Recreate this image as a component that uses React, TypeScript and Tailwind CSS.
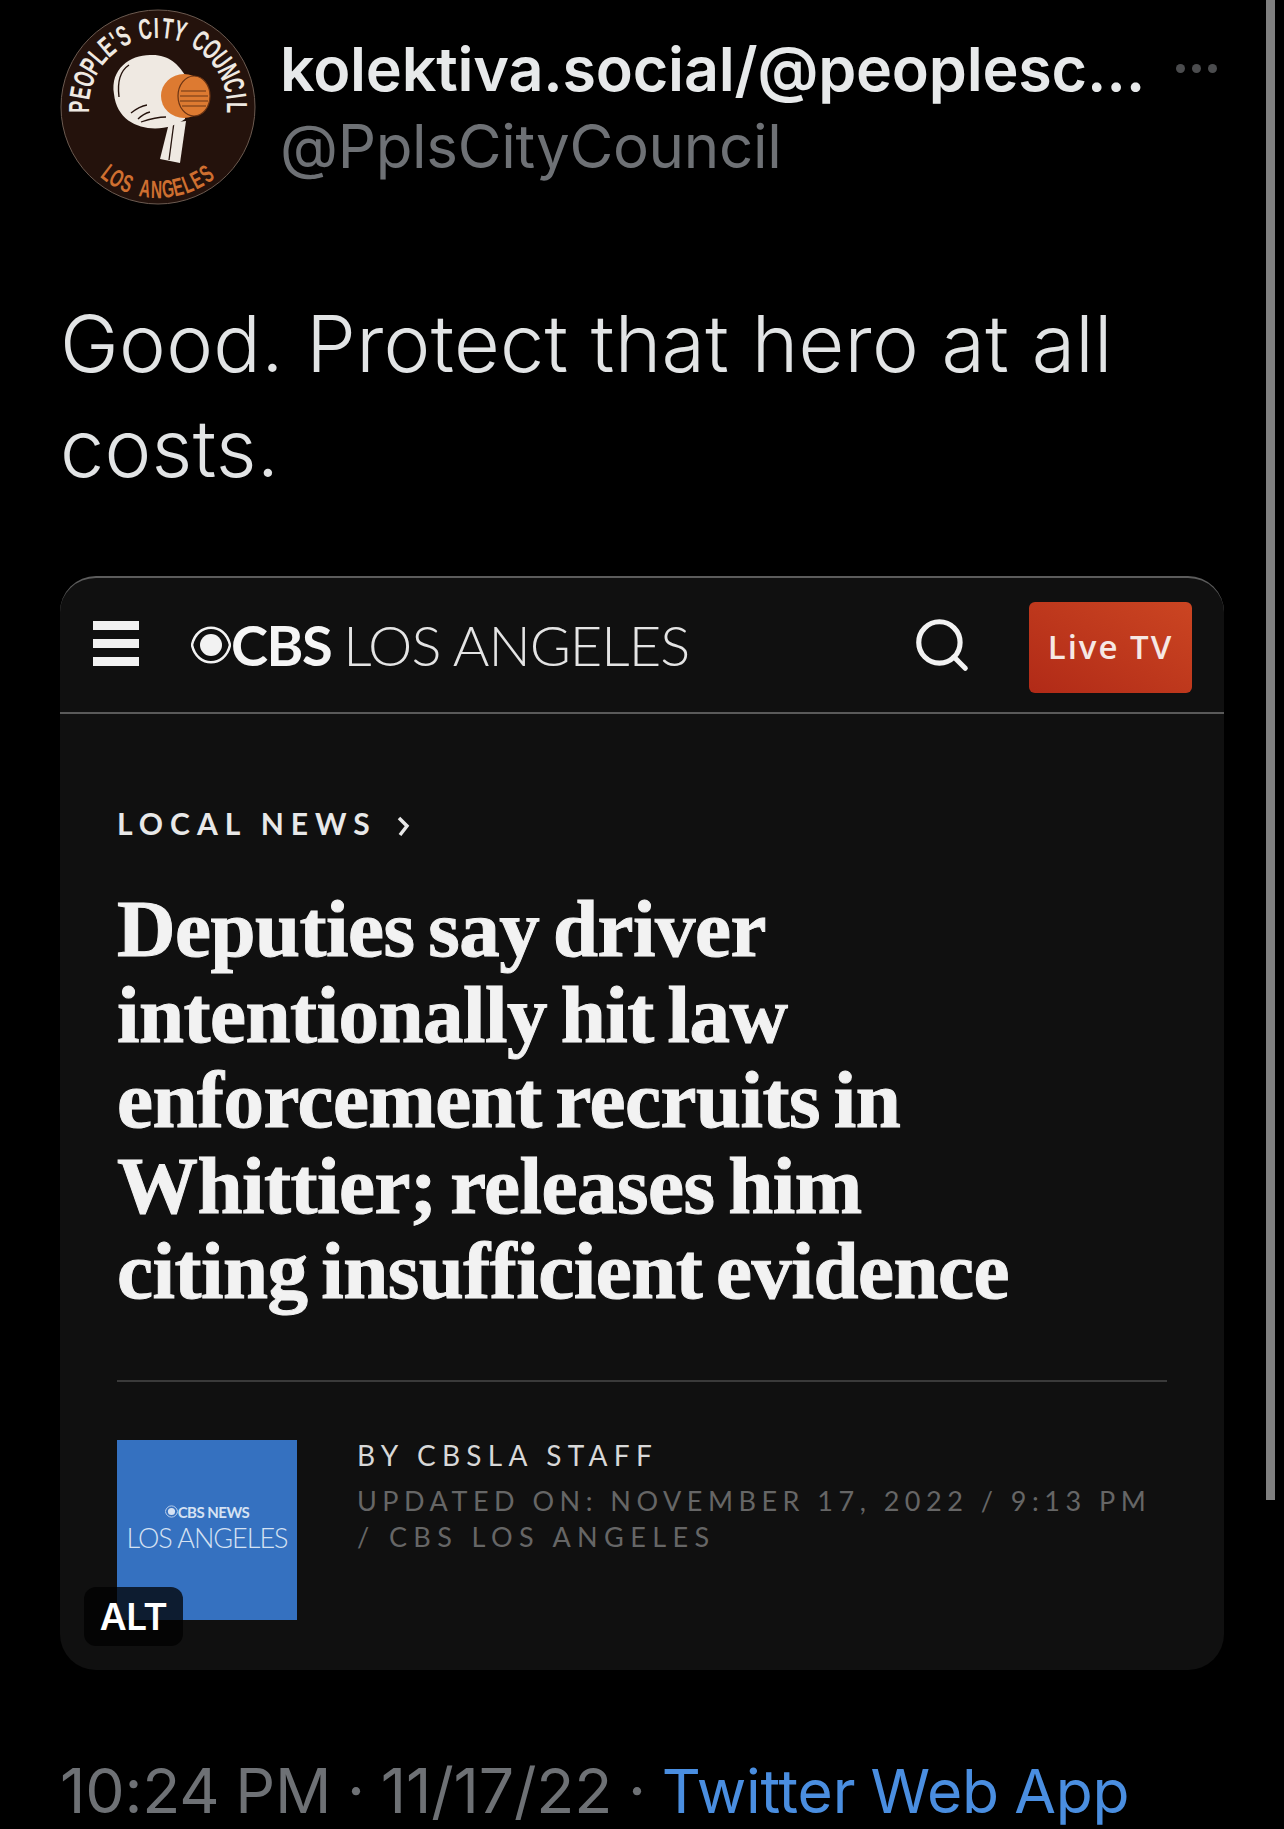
import React from 'react';
import { Search } from 'lucide-react';

const sans = 'font-["Inter",sans-serif]';

// sticker lettering: each letter is placed on the ring by hand
const topRing: [string, number][] = [
  ['P', -96], ['E', -86], ['O', -76], ['P', -66], ['L', -57], ['E', -48], ["'", -41], ['S', -34],
  ['C', -18], ['I', -10], ['T', -2], ['Y', 7],
  ['C', 23], ['O', 33], ['U', 43], ['N', 53], ['C', 63], ['I', 71], ['L', 79],
];
const bottomRing: [string, number][] = [
  ['L', -37], ['O', -30], ['S', -22],
  ['A', -9], ['N', -1], ['G', 7], ['E', 14], ['L', 21], ['E', 28], ['S', 36],
];

// round sticker avatar with the fist / megaphone drawing
const Avatar = () => (
  <svg width="196" height="196" viewBox="0 0 196 196" className="shrink-0">
    <circle cx="98" cy="98" r="97" fill="#24120c" stroke="#6b5a50" strokeWidth="1" />
    <g fontFamily="Liberation Sans, sans-serif" textAnchor="middle">
      {topRing.map(([ch, a], i) => (
        <text
          key={i}
          fontSize="29"
          fontWeight="700"
          fill="#efe9e2"
          transform={`rotate(${a * 1.03 + 9} 98 98) translate(98 29) scale(0.62 1)`}
        >
          {ch}
        </text>
      ))}
      {bottomRing.map(([ch, a], i) => (
        <text
          key={i}
          fontSize="25"
          fontWeight="700"
          fill="#cf6f30"
          transform={`rotate(${-a} 98 98) translate(98 189) scale(0.62 1)`}
        >
          {ch}
        </text>
      ))}
    </g>
    <path d="M109 114 L126 112 L120 154 L100 150 Z" fill="#efe9e2" />
    <path d="M114 113 L109 151" stroke="#24120c" strokeWidth="1.3" fill="none" />
    <path d="M54 85 C 50 60 70 46 90 46 C 108 45 118 55 125 66 L 125 110 C 105 126 58 124 54 85 Z" fill="#efe9e2" />
    <path d="M59 88 C 57 72 60 62 69 56" stroke="#24120c" strokeWidth="1.4" fill="none" />
    <path d="M71 104 C 76 100 81 97 87 96 M78 110 C 82 106 86 104 90 103 M81 113 C 90 110 98 108 106 108" stroke="#24120c" strokeWidth="1.3" fill="none" />
    <ellipse cx="124" cy="87" rx="23" ry="22" fill="#dd7a31" />
    <ellipse cx="134" cy="87" rx="16" ry="20" fill="#dd7a31" stroke="#6b3414" strokeWidth="1.2" />
    <path d="M121 82 H146 M120 87 H148 M120 92 H148 M122 97 H146" stroke="#6b3414" strokeWidth="1.1" />
  </svg>
);

const CbsEye = ({ size, color }: { size: number; color: string }) => (
  <svg width={size} height={size} viewBox="0 0 40 40" className="shrink-0">
    <path d="M1 20 C 6 -3 34 -3 39 20 C 34 43 6 43 1 20 Z" fill="none" stroke={color} strokeWidth="2.5" />
    <circle cx="20" cy="20" r="11" fill={color} />
  </svg>
);

const headline = [
  'Deputies say driver',
  'intentionally hit law',
  'enforcement recruits in',
  'Whittier; releases him',
  'citing insufficient evidence',
];

const App = () => {
  return (
    <div className={`relative w-[1284px] h-[1829px] overflow-hidden bg-black ${sans}`}>
      {/* overlay scrollbar */}
      <div className="absolute left-[1266px] top-0 w-[9px] h-[1500px] bg-[#808080]" />

      <header className="flex pl-[60px] pr-[67px] pt-[9px]">
        <Avatar />
        <div className="ml-[24px] pt-[25px] min-w-0 w-[866px]">
          <div className="text-[61px] leading-[70px] font-semibold tracking-[-0.2px] text-[#e7e9ea] whitespace-nowrap">
            kolektiva.social/@peoplesc…
          </div>
          <div className="text-[60px] leading-[84px] text-[#6e7175] tracking-[-0.3px] whitespace-nowrap">@PplsCityCouncil</div>
        </div>
        <div className="ml-auto mt-[55px] flex gap-[7px] h-[9px]">
          <span className="w-[9px] h-[9px] rounded-full bg-[#4b4c4e]" />
          <span className="w-[9px] h-[9px] rounded-full bg-[#4b4c4e]" />
          <span className="w-[9px] h-[9px] rounded-full bg-[#4b4c4e]" />
        </div>
      </header>

      <p className="mt-[86px] ml-[60px] w-[1120px] text-[79px] leading-[105px] font-light tracking-[0.3px] text-[#e2e4e5]">
        Good. Protect that hero at all costs.
      </p>

      <article className="relative mt-[75px] ml-[60px] w-[1164px] h-[1094px] rounded-[36px] overflow-hidden bg-[#101010] border-t-2 border-[#5c5c5c]">
        <nav className="flex items-center h-[136px] pl-[33px] pr-[32px] border-b-2 border-[#5a5a5a]">
          <div className="flex flex-col gap-[9px] w-[46px] mb-[3px]">
            <span className="h-[9px] bg-[#f2f2f2]" />
            <span className="h-[9px] bg-[#f2f2f2]" />
            <span className="h-[9px] bg-[#f2f2f2]" />
          </div>
          <div className="ml-[52px] flex items-center">
            <CbsEye size={40} color="#f2f2f2" />
            <span className='font-["Lato",sans-serif] text-[56px] font-bold tracking-[-1.5px] text-[#f5f5f5]'>CBS</span>
            <span className='ml-[12px] font-["Lato",sans-serif] text-[56px] font-light tracking-[-1px] text-[#e4e4e4]'>LOS ANGELES</span>
          </div>
          <Search size={62} strokeWidth={2} className="ml-auto text-[#f2f2f2]" />
          <div className='ml-[56px] mt-[4px] flex items-center justify-center w-[163px] h-[91px] rounded-[6px] bg-gradient-to-tr from-[#b12a17] to-[#cb4522] font-["Open_Sans",sans-serif] text-[33px] font-semibold tracking-[2px] text-[#f6e8e4]'>
            Live TV
          </div>
        </nav>

        <div className="px-[57px]">
          <div className="mt-[94px] flex items-center h-[30px] text-[30px] font-bold tracking-[7px] text-[#e8e8e8] font-['Lato',sans-serif]">
            LOCAL NEWS
            <svg width="14" height="22" viewBox="0 0 14 22" className="ml-[20px] mt-[6px]">
              <path d="M2 3 L10 11 L3 20" fill="none" stroke="#e8e8e8" strokeWidth="3.5" />
            </svg>
          </div>

          <h1 className='mt-[49px] font-["Liberation_Serif",serif] text-[81px] leading-[85.5px] font-bold tracking-[-0.5px] [word-spacing:-6px] [-webkit-text-stroke:1px_#f2f2f2] text-[#f2f2f2]'>
            {headline.map((line) => (
              <div key={line} className="whitespace-nowrap">{line}</div>
            ))}
          </h1>

          <div className="mt-[65px] border-t-2 border-[#3a3a3a] pt-[58px] flex">
            <div className="flex flex-col shrink-0 items-center justify-center w-[180px] h-[180px] bg-[#3571c0] pb-[3px] text-[#d5e2f3] font-['Lato',sans-serif]">
              <div className="flex items-center text-[15px] font-bold leading-[18px] tracking-[-0.5px]">
                <CbsEye size={13} color="#d5e2f3" />
                CBS NEWS
              </div>
              <div className="text-[27px] leading-[33px] font-light tracking-[-1px] whitespace-nowrap">LOS ANGELES</div>
            </div>
            <div className="ml-[60px] font-['Lato',sans-serif]">
              <div className="text-[28px] leading-[30px] tracking-[6.3px] text-[#d8d8d8]">BY CBSLA STAFF</div>
              <div className="mt-[13px] w-[830px] text-[27px] leading-[36px] tracking-[5.5px] text-[#666666]">
                UPDATED ON: NOVEMBER 17, 2022 / 9:13 PM
                <br />
                <span className="tracking-[6.4px]">/ CBS LOS ANGELES</span>
              </div>
            </div>
          </div>
        </div>

        {/* ALT badge overlays the picture */}
        <div className="absolute left-[24px] bottom-[24px] w-[99px] h-[59px] rounded-[12px] bg-black/75 flex items-center justify-center text-[37px] font-semibold tracking-[-0.5px] text-white">
          ALT
        </div>
      </article>

      <footer className="mt-[84px] ml-[60px] whitespace-nowrap text-[62.5px] leading-[72px] tracking-[-0.2px] [word-spacing:-1.5px] text-[#6e7175]">
        10:24 PM · 11/17/22 · <span className="text-[60.5px] text-[#4a8ee0]">Twitter Web App</span>
      </footer>
    </div>
  );
};

export default App;
